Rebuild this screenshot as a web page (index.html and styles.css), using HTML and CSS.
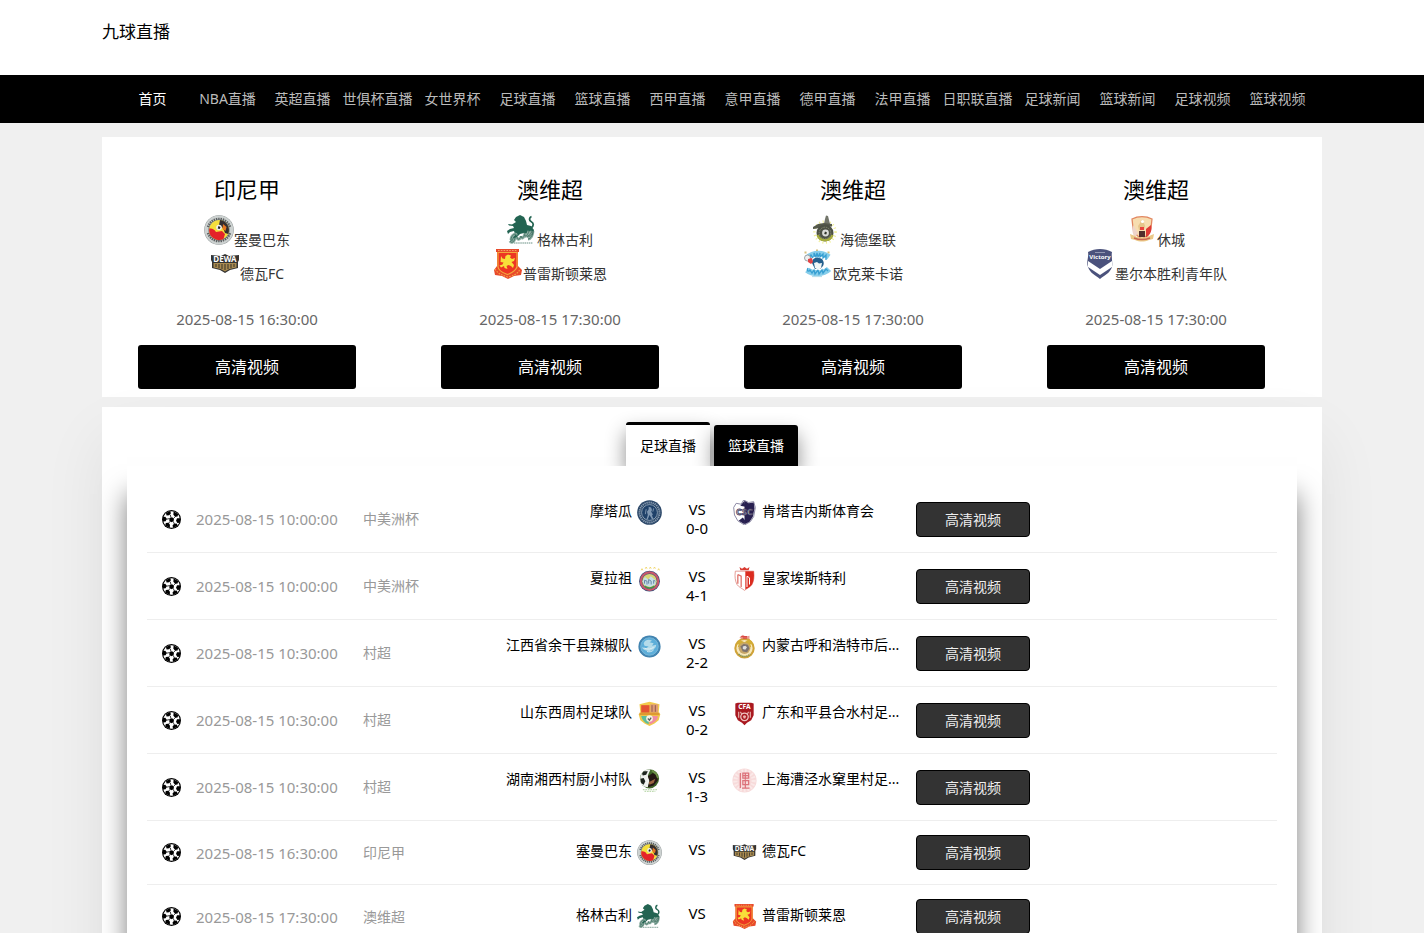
FILE: index.html
```html
<!DOCTYPE html>
<html lang="zh-CN">
<head>
    <meta charset="utf-8">
    <title>九球直播</title>
    <link rel="stylesheet" href="styles.css">
</head>
<body>
    <svg class="sprite" aria-hidden="true">
        <symbol id="ball" viewBox="0 0 20 20">
            <circle cx="10" cy="10" r="10" fill="#000"/>
            <circle cx="10" cy="10" r="8.8" fill="#fff"/>
            <path d="M8 8.400l2.600-.9 2 1.700-.4 2.700-2.600.9-2-1.700z"/>
            <path d="M4.200 3.200L8.600 1l.8 2.400-1.800 2.200-2.800.2z"/>
            <path d="M12.200 1.400l4.800 2.800-.6 2.600-2.600.4-1.800-2.200z"/>
            <path d="M19.200 8.600l-.4 4.800-2.600.2-1.400-2.200 1-2.600z"/>
            <path d="M16.600 16.200l-4.600 2.800-1-2.400 1.600-2.200 2.800-.2z"/>
            <path d="M8.200 19l-4.800-2.800.6-2.600 2.600-.2 1.800 2.200z"/>
            <path d="M1 12.200V7.400l2.400-.4 1.600 2.200-1.200 2.600z"/>
            <path d="M8.800 5l.6 3M12 9l2.400-2.400M11.800 12l1.400 3M8.200 12l-1.400 2.600M4.400 9.800L8 9" fill="none" stroke="#000" stroke-width=".8"/>
        </symbol>
        <symbol id="padang" viewBox="0 0 30 30">
            <circle cx="15" cy="15" r="14.800" fill="#8d9394"/>
            <circle cx="15" cy="15" r="12.600" fill="none" stroke="#cdd2d1" stroke-width="3.600"/>
            <path d="M4 12a11.500 11.500 0 0 1 22 0M4 18a11.500 11.500 0 0 0 22 0" fill="none" stroke="#5b5f60" stroke-width="2.400" stroke-dasharray="1.400 .9"/>
            <circle cx="15" cy="15" r="10" fill="#f5df3c"/>
            <path d="M16 5.100a10 10 0 0 1 8.200 13.800l-3.200-1-2-5-4-3z" fill="#332d30"/>
            <path d="M5.200 13.500c3-.5 5.500 1 6.800 3.500l6-1 3 3-1.500 5A10 10 0 0 1 5.200 13.500z" fill="#e42329"/>
            <path d="M19 9l3.500 3-1 4-3-2z" fill="#e57722"/>
            <circle cx="15" cy="12.500" r="2.800" fill="#eee"/>
            <path d="M14.500 11l2 1-.8 2-2-.6z" fill="#222"/>
        </symbol>
        <symbol id="green-lion" viewBox="0 0 30 30">
            <path d="M24 13c3-2 3-5 0-6.500-2-1-2-4 .5-5" fill="none" stroke="#236452" stroke-width="1.800"/>
            <path d="M7 5l2-3 4-2 4 2 2 4 1 4 4 1 3 4-1 4-4 2-5-3-4 1-3 3-4 4-3 1 1-4 4-4-1-3-4 1-2 2-1-3 3-2 4-1-1-2-4-.5-1-1.500 4 .5L9 7z" fill="#236452"/>
            <path d="M4 25c0-6 6-7 5-5M8 23c-1 5-4 5-5 3M10 22c0 4 4 2 4-1 0 3 3 3 4-3M18 20c0 2 2 2 4-4M20 22c2-1 4-3 5-6M21 20c1 3 5 0 5-4M26 16c0 4-2 8-5 8" fill="none" stroke="#8fafa4" stroke-width="2.800"/>
            <path d="M4 25c0-6 6-7 5-5M8 23c-1 5-4 5-5 3M10 22c0 4 4 2 4-1 0 3 3 3 4-3M18 20c0 2 2 2 4-4M20 22c2-1 4-3 5-6M21 20c1 3 5 0 5-4M26 16c0 4-2 8-5 8" fill="none" stroke="#477668" stroke-width="1"/>
            <path d="M7 28h19" stroke="#9bb5ad" stroke-width="1.600" stroke-dasharray="1.500 .6"/>
        </symbol>
        <symbol id="preston" viewBox="0 0 30 30">
            <path d="M3 0h23v3h-1v14l4 4-1 5-7 1-6 3-6-3-7-1-1-5 3-4V3H3z" fill="#e84a2b"/>
            <path d="M5 3.500h19V18c-2 5-6 6-9.500 7.500C11 24 6 23 5 18z" fill="#ed3523" stroke="#f3a93c" stroke-width="1.200"/>
            <path d="M8 7l1.500 2.500L12 10l.5-3L15 5.500l3 1-1 2 2 1.500 3-1-1 3-2.500 1 2.500 3-1 3-2-2-2.500-1-2 1 1 3-3-1-.5-2-3 1.500-1.500-2 3-1 1-2-3-.5z" fill="#f8df3a"/>
            <path d="M2 20c3 5 7 6 12.500 8C20 27 25 25 27 20" fill="none" stroke="#f6a245" stroke-width="1.200" stroke-dasharray="1.600 1.200"/>
            <path d="M5 1.500h19" stroke="#f9a868" stroke-width=".9" stroke-dasharray="1.600 1.200"/>
        </symbol>
        <symbol id="heidelberg" viewBox="0 0 30 30">
            <circle cx="15" cy="17" r="10.500" fill="none" stroke="#efee94" stroke-width="2.600" stroke-dasharray="1 2.600"/>
            <path d="M15 4l1-3.500 2 .5 1 4 1 4h-6z" fill="#73766b"/>
            <path d="M3 12l5-3 6-1 8 1v2.500l-8 .5-7 1.500-4 .5z" fill="#565a4c"/>
            <circle cx="15" cy="18" r="8.500" fill="#4d5145"/>
            <path d="M7.500 20a8 8 0 0 0 15 0" fill="none" stroke="#a7ad3d" stroke-width="2.200"/>
            <circle cx="15" cy="18" r="5.800" fill="none" stroke="#85896f" stroke-width="1" stroke-dasharray="1.500 1"/>
            <circle cx="15.500" cy="18" r="3.400" fill="#dcdcd8"/>
            <path d="M15 16.500l2 1-.8 2-2-.4z" fill="#303429"/>
        </symbol>
        <symbol id="oakleigh" viewBox="0 0 30 30">
            <path d="M1.500 3.500h2M13 1.500h2M24.500 3.500h2" stroke="#d8bf7c" stroke-width="2"/>
            <path d="M4 9c4-4 9-4.500 12-4.500S23 6 26 8" fill="none" stroke="#86cdea" stroke-width="5.500"/>
            <path d="M6 10l2-4 2 3M11 8V4l2 4 1-4 1 4 2-4v4l3-3v4l3-3v5" fill="none" stroke="#379fd2" stroke-width="1.300"/>
            <path d="M4 21c5 4 16 5 22-1" fill="none" stroke="#86cdea" stroke-width="6"/>
            <path d="M5 19c-2 3 1 4 2 2l2 3 2-3 1 4 3-4 1 4 3-4 1 3 3-4 2 2" fill="none" stroke="#379fd2" stroke-width="1.300"/>
            <path d="M9 14c0-5 4-6 7-5 4 0 6 5 4 8l-3 3h-5z" fill="#245f8d"/>
            <path d="M11 14l3-1 2 1.500 3-.5-1 5-2.500 2-3.500-2z" fill="#f4f7f6"/>
            <circle cx="4.500" cy="9" r="3" fill="#edf0f1" stroke="#8a8f92" stroke-width=".8"/>
            <path d="M5 10l4-1 1 4-2 2-3-2z" fill="#e34345"/>
            <path d="M9 27.500h10" stroke="#b9dfec" stroke-width="1.200"/>
        </symbol>
        <symbol id="hume" viewBox="0 0 30 30">
            <path d="M5 4c6-3 14-3 20 0l-1 9c0 5-4 8-9 11-5-3-9-6-9-11z" fill="#f7ddb0" stroke="#e28760" stroke-width="1.300"/>
            <path d="M6 10l5 8-3 4c-3-3-3-8-2-12z" fill="#efd4c9"/>
            <path d="M24 10l-5 4v9c5-4 6-8 5-13z" fill="#df3935"/>
            <path d="M11 11l2-3 1-3h2l1 3 1 3-1 4h-5z" fill="#e6c58a"/>
            <circle cx="15.500" cy="6.500" r="1.600" fill="#fff"/>
            <path d="M12 16h6v6h-6z" fill="#522e2d"/>
            <path d="M13 12h4v3h-4z" fill="#e9443f"/>
            <path d="M3 19l5 2c4 2 10 2 14 0l5-2-1 5-4 1c-5 2-9 2-14 0l-4-1z" fill="#ebc987"/>
            <path d="M7 23c5 2 11 2 16 0" fill="none" stroke="#ca6755" stroke-width="1.500"/>
        </symbol>
        <symbol id="motagua" viewBox="0 0 30 30">
            <circle cx="15" cy="15" r="14.800" fill="#2c4869"/>
            <circle cx="15" cy="15" r="12" fill="none" stroke="#8fa1b5" stroke-width="2.200" stroke-dasharray="1.500 1"/>
            <circle cx="15" cy="15" r="9.500" fill="#1f4169" stroke="#b3c2d0" stroke-width=".8"/>
            <path d="M14 8l3 1 1 3-1 2 2 3-1 2 2 4h-2l-3-5-2 5-2 1 2-6-1-4 2-3z" fill="#7f97b2"/>
            <path d="M11 11l-1 6M20 10l-1 4" stroke="#8ca0b8"/>
        </symbol>
        <symbol id="xelaju" viewBox="0 0 30 30">
            <path d="M5 4l1-2 1 2M10 2l1-2 1 2M15 2l1-2 1 2M20 2l1-2 1 2M25 4l1-2 1 2" fill="none" stroke="#eed15c"/>
            <circle cx="15" cy="17" r="12.500" fill="#344d7a"/>
            <circle cx="15" cy="17" r="10.500" fill="none" stroke="#c9586c" stroke-width="2.600"/>
            <circle cx="15" cy="17" r="8.700" fill="#d9d575"/>
            <path d="M6.500 17l3-5 4 3 3-4 6 5-.5 5-6 3-7-2z" fill="#c4dee8"/>
            <path d="M9 20v-4l3 1v4M14 20v-5l3 2v4M20 20v-4l2 1" fill="none" stroke="#6788a6" stroke-width="1.200"/>
            <path d="M9 23c4 3 8 3 12 0" fill="none" stroke="#48914e" stroke-width="2"/>
        </symbol>
        <symbol id="esteli" viewBox="0 0 30 30">
            <path d="M9 0l3 2 3-2 3 2 3-2-1 4H10z" fill="#d93a30"/>
            <path d="M4 5h22c1 7 0 12-2 16-2 3-5 4-9 7-4-3-7-4-9-7C4 17 3 12 4 5z" fill="#fff" stroke="#e08a82" stroke-width="1"/>
            <path d="M16 5h10c1 7 0 12-2 16-2 3-4 4-8 6z" fill="#db2c20"/>
            <path d="M7 9v11M7 9l4 2v13" fill="none" stroke="#df6c64" stroke-width="1.500"/>
            <path d="M18 24V11l3 2v8" fill="none" stroke="#fff" stroke-width="1.200"/>
        </symbol>
        <symbol id="yugan" viewBox="0 0 30 30">
            <circle cx="15" cy="15" r="13.300" fill="#397eac"/>
            <circle cx="15" cy="15" r="10.600" fill="#5daed9" stroke="#81bddd"/>
            <circle cx="15" cy="15" r="12" fill="none" stroke="#5b98bf" stroke-dasharray="1 1.500"/>
            <path d="M8 11c2-4 6-5 10-3l-3 2 5 1-2 3 5-1c0 4-3 6-7 7-5 1-9-1-10-4l5 1 3-2-5-1z" fill="#b4dbea"/>
            <path d="M9 17c4 2 8 1 11-1M12 21c3 1 6 0 8-2" fill="none" stroke="#e4f3f7"/>
        </symbol>
        <symbol id="hohhot" viewBox="0 0 30 30">
            <path d="M9 4l4-3 3 2 5-1v5l-7 2z" fill="#ec9b94"/>
            <circle cx="15" cy="17" r="11" fill="#f8e9bc" stroke="#d0a338" stroke-width="2.500"/>
            <path d="M5 13l4-6 6 3 6-4 5 7-4-1 1 4H7l1-4z" fill="#d3ae35"/>
            <path d="M11 3h7M13 5h5" stroke="#d94b45" stroke-width="1.500"/>
            <circle cx="15" cy="17" r="7" fill="#c6a668"/>
            <path d="M10 15l4-3 5 1 2 4-3 5-5-1z" fill="#7c7370"/>
            <path d="M13 15l3-1 2 2-2 3-3-1z" fill="#ddd"/>
            <path d="M8 24c4 4 10 4 14 0" fill="none" stroke="#7d935c" stroke-width="2" stroke-dasharray="1.500 1"/>
        </symbol>
        <symbol id="xizhou" viewBox="0 0 30 30">
            <path d="M3 4l7-2 5-1 5 1 7 2-1 10 2 2-2 7-5 4-6 3-6-3-5-4-2-7 2-2z" fill="#f2ca4b"/>
            <path d="M5 5h10v9H5z" fill="#e35333"/>
            <path d="M16 4h9v10h-9z" fill="#df9b76"/>
            <path d="M18 5v8M22 5v8" stroke="#925c4c" stroke-width="1.200"/>
            <path d="M3 14h24v3H3z" fill="#de9930"/>
            <path d="M5 18h9v10c-5-2-8-5-9-10z" fill="#5dbc9c"/>
            <path d="M15 18h10c0 5-4 8-10 10z" fill="#ef8ba1"/>
            <circle cx="15" cy="21" r="4" fill="#f6f3e5"/>
            <path d="M13 21l2 2 2-3" fill="none" stroke="#59635e" stroke-width="1.500"/>
        </symbol>
        <symbol id="xiangxi" viewBox="0 0 30 30">
            <circle cx="15" cy="13" r="11.500" fill="#41672b"/>
            <path d="M4 15C3 7 9 1 16 2l-3 7 2 6-2 8c-5 0-8-3-9-8z" fill="#eef0ed"/>
            <path d="M8 4l5 0-2 4-4 1-1-2zM4 13l4-1 2 4-2 4-3-2z" fill="#1c231d"/>
            <path d="M13 10l6-4 5 3 1 6-5 6-7 2 2-7z" fill="#241814"/>
            <path d="M14 17l8-4-2 5-5 2z" fill="#9b6440"/>
            <path d="M18 3l5 4 2 5" fill="none" stroke="#6f9148" stroke-width="2"/>
            <path d="M7 26h17M9 28h13" stroke="#c0dbb3" stroke-width="1.400" stroke-dasharray="2 1"/>
        </symbol>
        <symbol id="caojing" viewBox="0 0 30 30">
            <circle cx="15" cy="15" r="14.500" fill="#f7dada"/>
            <circle cx="15" cy="15" r="11" fill="none" stroke="#fae9e8" stroke-width="5" stroke-dasharray="2 2"/>
            <path d="M10 6v18M13 6h7v6h-7zM13 9h7M16 6v8M13 15h7v5h-7zM16 15v9M12 24h9" fill="none" stroke="#dc737b" stroke-width="1.500"/>
        </symbol>
    </svg>

    <header class="header">
        <div class="container">
            <a class="logo" href="#">九球直播</a>
        </div>
    </header>

    <nav class="nav">
        <ul class="container nav-list">
            <li><a class="active" href="#">首页</a></li>
            <li><a href="#">NBA直播</a></li>
            <li><a href="#">英超直播</a></li>
            <li><a href="#">世俱杯直播</a></li>
            <li><a href="#">女世界杯</a></li>
            <li><a href="#">足球直播</a></li>
            <li><a href="#">篮球直播</a></li>
            <li><a href="#">西甲直播</a></li>
            <li><a href="#">意甲直播</a></li>
            <li><a href="#">德甲直播</a></li>
            <li><a href="#">法甲直播</a></li>
            <li><a href="#">日职联直播</a></li>
            <li><a href="#">足球新闻</a></li>
            <li><a href="#">篮球新闻</a></li>
            <li><a href="#">足球视频</a></li>
            <li><a href="#">篮球视频</a></li>
        </ul>
    </nav>

    <section class="container featured">
        <div class="card">
            <h2>印尼甲</h2>
            <p class="card-team"><svg><use href="#padang"/></svg><span>塞曼巴东</span></p>
            <p class="card-team">
                <svg viewBox="0 0 30 30">
                    <path d="M1 6l10 1 4-2 4 2 10-1v5l-1 2v6l-8 2-5 3-5-3-8-2v-6l-1-2z" fill="#353432"/>
                    <path d="M3.500 14h23v4.500l-7 1.500-4.500 2.500-4.500-2.500-7-1.500z" fill="#a88a50"/>
                    <path d="M6 15v3M9 15v4M12 15v5M15 15v6M18 15v5M21 15v4M24 15v3" stroke="#4a412f" stroke-width="1.200"/>
                    <text x="15" y="13" class="crest-text dewa-text">DEWA</text>
                </svg><span>德瓦FC</span>
            </p>
            <p class="card-time">2025-08-15 16:30:00</p>
            <a class="card-btn" href="#">高清视频</a>
        </div>
        <div class="card">
            <h2>澳维超</h2>
            <p class="card-team"><svg><use href="#green-lion"/></svg><span>格林古利</span></p>
            <p class="card-team"><svg><use href="#preston"/></svg><span>普雷斯顿莱恩</span></p>
            <p class="card-time">2025-08-15 17:30:00</p>
            <a class="card-btn" href="#">高清视频</a>
        </div>
        <div class="card">
            <h2>澳维超</h2>
            <p class="card-team"><svg><use href="#heidelberg"/></svg><span>海德堡联</span></p>
            <p class="card-team"><svg><use href="#oakleigh"/></svg><span>欧克莱卡诺</span></p>
            <p class="card-time">2025-08-15 17:30:00</p>
            <a class="card-btn" href="#">高清视频</a>
        </div>
        <div class="card">
            <h2>澳维超</h2>
            <p class="card-team"><svg><use href="#hume"/></svg><span>休城</span></p>
            <p class="card-team">
                <svg viewBox="0 0 30 30">
                    <path d="M3 3c7-4 17-4 24 0-1 5 1 10 0 15-2 6-7 8-12 12C10 26 5 24 3 18 1 13 4 8 3 3z" fill="#4b527c"/>
                    <path d="M3 12l12 8 12-8v6l-12 8L3 18z" fill="#fff"/>
                    <text x="15" y="10" class="crest-text victory-text">Victory</text>
                    <path d="M10 3.500h10" stroke="#9298b2"/>
                </svg><span>墨尔本胜利青年队</span>
            </p>
            <p class="card-time">2025-08-15 17:30:00</p>
            <a class="card-btn" href="#">高清视频</a>
        </div>
    </section>

    <main class="container schedule">
        <div class="tabs">
            <button class="tab active" type="button">足球直播</button>
            <button class="tab" type="button">篮球直播</button>
        </div>
        <div class="panel">
            <table class="matches">
                <colgroup>
                    <col class="col-icon">
                    <col class="col-time">
                    <col class="col-league">
                    <col class="col-match">
                    <col>
                </colgroup>
                <tbody>
                    <tr>
                        <td class="sport"><svg><use href="#ball"/></svg></td>
                        <td class="time">2025-08-15 10:00:00</td>
                        <td class="league">中美洲杯</td>
                        <td><div class="match">
                            <div class="team home"><span>摩塔瓜</span><svg><use href="#motagua"/></svg></div>
                            <div class="score">VS<br>0-0</div>
                            <div class="team">
                                <svg viewBox="0 0 30 30">
                                    <path d="M14 0l6 3 6-1 2 7-2 11-4 6-7 4-8-5-4-7-1-9 3-5 6 1z" fill="#fff" stroke="#777494"/>
                                    <path d="M15 1l5 3 6-1 1 7-2 10-4 6-6 3z" fill="#282050"/>
                                    <path d="M10 7l5-6 1 7zM8 25l5-4 3 4-1 4z" fill="#292251"/>
                                    <text x="15" y="18" class="crest-text csc-text">CSC</text>
                                </svg><span>肯塔吉内斯体育会</span>
                            </div>
                        </div></td>
                        <td><a class="watch" href="#">高清视频</a></td>
                    </tr>
                    <tr>
                        <td class="sport"><svg><use href="#ball"/></svg></td>
                        <td class="time">2025-08-15 10:00:00</td>
                        <td class="league">中美洲杯</td>
                        <td><div class="match">
                            <div class="team home"><span>夏拉祖</span><svg><use href="#xelaju"/></svg></div>
                            <div class="score">VS<br>4-1</div>
                            <div class="team"><svg><use href="#esteli"/></svg><span>皇家埃斯特利</span></div>
                        </div></td>
                        <td><a class="watch" href="#">高清视频</a></td>
                    </tr>
                    <tr>
                        <td class="sport"><svg><use href="#ball"/></svg></td>
                        <td class="time">2025-08-15 10:30:00</td>
                        <td class="league">村超</td>
                        <td><div class="match">
                            <div class="team home"><span>江西省余干县辣椒队</span><svg><use href="#yugan"/></svg></div>
                            <div class="score">VS<br>2-2</div>
                            <div class="team"><svg><use href="#hohhot"/></svg><span>内蒙古呼和浩特市后...</span></div>
                        </div></td>
                        <td><a class="watch" href="#">高清视频</a></td>
                    </tr>
                    <tr>
                        <td class="sport"><svg><use href="#ball"/></svg></td>
                        <td class="time">2025-08-15 10:30:00</td>
                        <td class="league">村超</td>
                        <td><div class="match">
                            <div class="team home"><span>山东西周村足球队</span><svg><use href="#xizhou"/></svg></div>
                            <div class="score">VS<br>0-2</div>
                            <div class="team">
                                <svg viewBox="0 0 30 30">
                                    <path d="M4 3l3-1h16l3 1v14l-3 6-5 3-3 3-3-3-5-3-3-6z" fill="#a91920"/>
                                    <text x="15" y="10" class="crest-text cfa-text">CFA</text>
                                    <path d="M8 13v7M22 13v7M10 13l2 3M20 13l-2 3" stroke="#e2a6a1" stroke-width="1.500"/>
                                    <circle cx="15" cy="19" r="4.500" fill="none" stroke="#f1c8c4" stroke-width="1.500"/>
                                    <path d="M15 17l2 1-1 3h-2l-1-3z" fill="#ebb5ad"/>
                                </svg><span>广东和平县合水村足...</span>
                            </div>
                        </div></td>
                        <td><a class="watch" href="#">高清视频</a></td>
                    </tr>
                    <tr>
                        <td class="sport"><svg><use href="#ball"/></svg></td>
                        <td class="time">2025-08-15 10:30:00</td>
                        <td class="league">村超</td>
                        <td><div class="match">
                            <div class="team home"><span>湖南湘西村厨小村队</span><svg><use href="#xiangxi"/></svg></div>
                            <div class="score">VS<br>1-3</div>
                            <div class="team"><svg><use href="#caojing"/></svg><span>上海漕泾水窠里村足...</span></div>
                        </div></td>
                        <td><a class="watch" href="#">高清视频</a></td>
                    </tr>
                    <tr>
                        <td class="sport"><svg><use href="#ball"/></svg></td>
                        <td class="time">2025-08-15 16:30:00</td>
                        <td class="league">印尼甲</td>
                        <td><div class="match">
                            <div class="team home"><span>塞曼巴东</span><svg><use href="#padang"/></svg></div>
                            <div class="score">VS</div>
                            <div class="team">
                                <svg viewBox="0 0 30 30">
                                    <path d="M1 6l10 1 4-2 4 2 10-1v5l-1 2v6l-8 2-5 3-5-3-8-2v-6l-1-2z" fill="#353432"/>
                                    <path d="M3.500 14h23v4.500l-7 1.500-4.500 2.500-4.500-2.500-7-1.500z" fill="#a88a50"/>
                                    <path d="M6 15v3M9 15v4M12 15v5M15 15v6M18 15v5M21 15v4M24 15v3" stroke="#4a412f" stroke-width="1.200"/>
                                    <text x="15" y="13" class="crest-text dewa-text">DEWA</text>
                                </svg><span>德瓦FC</span>
                            </div>
                        </div></td>
                        <td><a class="watch" href="#">高清视频</a></td>
                    </tr>
                    <tr>
                        <td class="sport"><svg><use href="#ball"/></svg></td>
                        <td class="time">2025-08-15 17:30:00</td>
                        <td class="league">澳维超</td>
                        <td><div class="match">
                            <div class="team home"><span>格林古利</span><svg><use href="#green-lion"/></svg></div>
                            <div class="score">VS</div>
                            <div class="team"><svg><use href="#preston"/></svg><span>普雷斯顿莱恩</span></div>
                        </div></td>
                        <td><a class="watch" href="#">高清视频</a></td>
                    </tr>
                </tbody>
            </table>
        </div>
    </main>
</body>
</html>
```

FILE: styles.css
```css
* {
    box-sizing: border-box;
}
body {
    margin: 0;
    background: #f0f0f0;
    color: #000;
    font-family: "Noto Sans", "Noto Sans CJK SC", sans-serif;
    font-size: 14px;
    line-height: 20px;
}
h2, p, ul {
    margin: 0;
    padding: 0;
}
a {
    color: inherit;
    text-decoration: none;
}
svg {
    display: block;
    flex-shrink: 0;
}
.sprite {
    position: absolute;
    width: 0;
    height: 0;
}
.container {
    max-width: 1220px;
    margin: 0 auto;
}

/* header */
.header {
    background: #fff;
    padding: 20px 0 31px;
}
.logo {
    display: block;
    font-size: 17px;
    line-height: 24px;
}
.nav {
    background: #000;
}
.nav-list {
    display: flex;
    padding: 0 7px 0 13px;
    list-style: none;
}
.nav-list li {
    flex: 1;
    text-align: center;
    white-space: nowrap;
}
.nav-list a {
    display: block;
    color: #bbb;
    line-height: 48px;
}
.nav-list a.active {
    color: #fff;
}

/* featured matches */
.featured {
    display: grid;
    grid-template-columns: repeat(4, 1fr);
    gap: 13px;
    margin-top: 14px;
    padding: 36px 21px 8px 0;
    background: #fff;
}
.card {
    padding: 0 36px;
    text-align: center;
}
.card h2 {
    margin-bottom: 10px;
    font-size: 22px;
    font-weight: normal;
    line-height: 32px;
}
.card-team {
    display: flex;
    justify-content: center;
    align-items: baseline;
    height: 34px;
    color: #333;
}
.card-team svg {
    width: 30px;
    height: 30px;
}
.card-time {
    margin: 26px 0 16px;
    color: #666;
    font-size: 15px;
}
.card-btn {
    display: block;
    background: #000;
    border-radius: 3px;
    color: #fff;
    font-size: 16px;
    line-height: 44px;
}

/* schedule */
.schedule {
    margin-top: 10px;
    padding: 15px 25px 25px;
    background: #fff;
    box-shadow: 0 30px 60px rgba(0, 0, 0, 0.07);
}
.tabs {
    display: flex;
    justify-content: center;
    align-items: flex-end;
    gap: 4px;
}
.tab {
    height: 41px;
    padding: 0 14px;
    background: #000;
    border: none;
    border-radius: 3px 3px 0 0;
    box-shadow: 0 10px 20px rgba(0, 0, 0, 0.45);
    color: #fff;
    font: inherit;
    cursor: pointer;
}
.tab.active {
    height: 44px;
    background: #fff;
    border-top: 3px solid #000;
    color: #000;
}
.panel {
    position: relative;
    padding: 20px;
    background: #fff;
    box-shadow: 0 28px 25px rgba(0, 0, 0, 0.5);
}
.matches {
    width: 100%;
    border-spacing: 0;
    table-layout: fixed;
}
.matches td {
    padding: 14px 0;
    border-bottom: 1px solid #eee;
    vertical-align: middle;
}
.col-icon { width: 49px; }
.col-time { width: 167px; }
.col-league { width: 122px; }
.col-match { width: 431px; }
.matches td.sport {
    padding-left: 15px;
}
.sport svg {
    width: 19px;
    height: 19px;
}
.time, .league {
    color: #999;
}
.time {
    font-size: 15px;
}
.match {
    display: flex;
    align-items: flex-start;
}
.team {
    display: flex;
    flex: 1;
    gap: 5px;
    line-height: 22px;
    white-space: nowrap;
}
.home {
    flex: 0 0 177px;
    justify-content: flex-end;
}
.team svg {
    width: 25px;
    height: 25px;
}
.score {
    width: 70px;
    font-size: 15px;
    line-height: 19px;
    text-align: center;
}
.watch {
    display: block;
    width: 114px;
    background: #333;
    border: 1px solid #000;
    border-radius: 4px;
    color: #eee;
    line-height: 33px;
    text-align: center;
}

/* crest lettering */
.crest-text {
    fill: #fff;
    font-weight: bold;
    text-anchor: middle;
}
.dewa-text { font-size: 8px; }
.victory-text { font-size: 6px; }
.cfa-text { font-size: 8px; }
.csc-text {
    font-size: 11px;
    stroke: #403860;
    stroke-width: 1px;
}
```
